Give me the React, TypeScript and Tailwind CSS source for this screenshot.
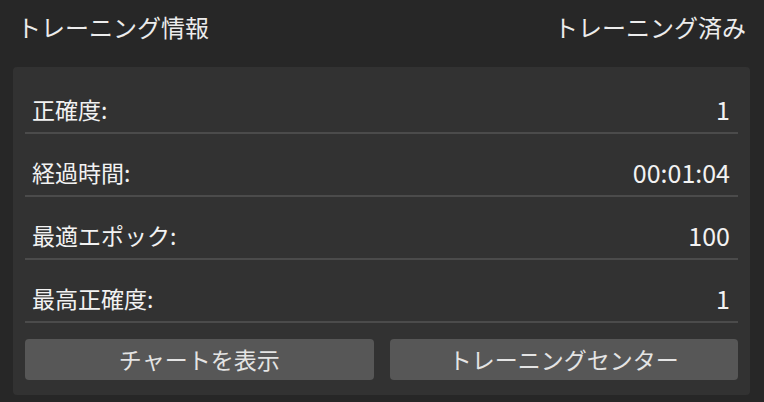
import React from "react";

const rows: { label: string; value: string }[] = [
  { label: "正確度:", value: "1" },
  { label: "経過時間:", value: "00:01:04" },
  { label: "最適エポック:", value: "100" },
  { label: "最高正確度:", value: "1" },
];

export default function App() {
  return (
    <div
      className="w-[764px] h-[402px] bg-[#272727] pl-[13px] pr-[14px] overflow-hidden"
      style={{ fontFamily: '"Noto Sans CJK JP", "Noto Sans", sans-serif' }}
    >
      <div className="h-[54px] flex items-center justify-between px-[4px] text-[24px] text-[#ececec]">
        <span>トレーニング情報</span>
        <span>トレーニング済み</span>
      </div>
      <div className="mt-[13px] rounded-[4px] bg-[#323232] px-[12px] pt-[4px] pb-[15px]">
        {rows.map((r) => (
          <div
            key={r.label}
            className="h-[63px] flex items-end justify-between border-b-2 border-[#4b4b4b] pl-[7px] pr-[8px] pb-[10px] text-[23px] leading-[26px] text-[#f2f2f2]"
          >
            <span>{r.label}</span>
            <span className="text-[25px]">{r.value}</span>
          </div>
        ))}
        <div className="mt-[16px] grid grid-cols-2 gap-[16px]">
          <button className="h-[41px] rounded-[4px] bg-[#575757] text-[23px] text-[#e4e4e4]">
            チャートを表示
          </button>
          <button className="h-[41px] rounded-[4px] bg-[#575757] text-[23px] text-[#e4e4e4]">
            トレーニングセンター
          </button>
        </div>
      </div>
    </div>
  );
}
